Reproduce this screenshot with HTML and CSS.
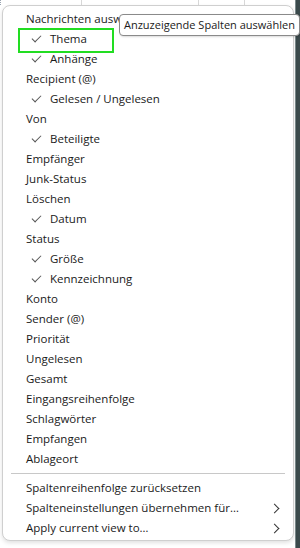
FILE: index.html
```html
<!DOCTYPE html>
<html lang="de">

<head>
    <meta charset="UTF-8">
    <meta name="viewport" content="width=device-width, initial-scale=1.0">
    <title>Spalten auswählen</title>
    <link rel="stylesheet" href="styles.css">
</head>

<body>
    <div class="screen">
        <div class="app">
            <div class="header-strip">
                <span class="col-line line-a"></span>
                <span class="col-line line-b"></span>
                <span class="col-line line-c"></span>
            </div>

            <div class="menu">
                <div class="item">Nachrichten auswählen</div>
                <div class="item checked focus">Thema</div>
                <div class="item checked">Anhänge</div>
                <div class="item">Recipient (@)</div>
                <div class="item checked">Gelesen / Ungelesen</div>
                <div class="item">Von</div>
                <div class="item checked">Beteiligte</div>
                <div class="item">Empfänger</div>
                <div class="item">Junk-Status</div>
                <div class="item">Löschen</div>
                <div class="item checked">Datum</div>
                <div class="item">Status</div>
                <div class="item checked">Größe</div>
                <div class="item checked">Kennzeichnung</div>
                <div class="item">Konto</div>
                <div class="item">Sender (@)</div>
                <div class="item">Priorität</div>
                <div class="item">Ungelesen</div>
                <div class="item">Gesamt</div>
                <div class="item">Eingangsreihenfolge</div>
                <div class="item">Schlagwörter</div>
                <div class="item">Empfangen</div>
                <div class="item">Ablageort</div>
                <div class="separator"></div>
                <div class="item">Spaltenreihenfolge zurücksetzen</div>
                <div class="item submenu">Spalteneinstellungen übernehmen für…</div>
                <div class="item submenu">Apply current view to…</div>
            </div>

            <div class="tooltip">Anzuzeigende Spalten auswählen</div>
        </div>
        <div class="edge"></div>
    </div>
</body>

</html>
```

FILE: styles.css
```css
* {
    box-sizing: border-box;
}

body {
    margin: 0;
    font-family: "Open Sans", "Noto Sans", Arial, sans-serif;
    font-size: 11.5px;
    color: #1a1a1a;
    background: #ffffff;
}

.screen {
    display: flex;
    width: 300px;
    height: 548px;
    overflow: hidden;
}

.app {
    position: relative;
    flex: 1;
    background: #ffffff;
}

.edge {
    width: 5px;
    background: #3b4a4c;
    border-left: 1px solid #7c8a8c;
}

.header-strip {
    height: 5px;
    border-left: 1px dotted #9aa4b0;
    position: relative;
}

.col-line {
    position: absolute;
    top: 0;
    width: 1px;
    height: 12px;
    background: #d8d8d8;
}

.line-a { left: 80px; }
.line-b { left: 197px; }
.line-c { left: 243px; }

.menu {
    position: relative;
    margin-left: 2px;
    width: 292px;
    background: #ffffff;
    border: 1px solid #cfcfcf;
    border-radius: 8px;
    padding: 3px 0 2px;
    box-shadow: 0 2px 4px rgba(0, 0, 0, 0.12);
}

.item {
    position: relative;
    height: 20px;
    line-height: 20px;
    padding-left: 23px;
    white-space: nowrap;
}

.item.checked {
    padding-left: 47px;
}

.item.checked::before {
    content: "";
    position: absolute;
    left: 29px;
    top: 6px;
    width: 8px;
    height: 4px;
    border-left: 1.5px solid #555;
    border-bottom: 1.5px solid #555;
    transform: rotate(-45deg);
}

.item.focus::after {
    content: "";
    position: absolute;
    left: 15px;
    top: -1px;
    width: 92px;
    height: 21px;
    border: 2px solid #22dd22;
}

.item.submenu::after {
    content: "";
    position: absolute;
    right: 15px;
    top: 7px;
    width: 6px;
    height: 6px;
    border-top: 1px solid #333;
    border-right: 1px solid #333;
    transform: rotate(45deg);
}

.separator {
    height: 1px;
    margin: 4px 8px 4px;
    background: #c8c8c8;
}

.tooltip {
    position: absolute;
    left: 119px;
    top: 14px;
    height: 22px;
    line-height: 20px;
    padding: 0 4px;
    background: #ffffff;
    border: 1px solid #8a8a8a;
    border-radius: 4px;
    white-space: nowrap;
    font-size: 11px;
    box-shadow: 1px 1px 2px rgba(0, 0, 0, 0.15);
}
```
